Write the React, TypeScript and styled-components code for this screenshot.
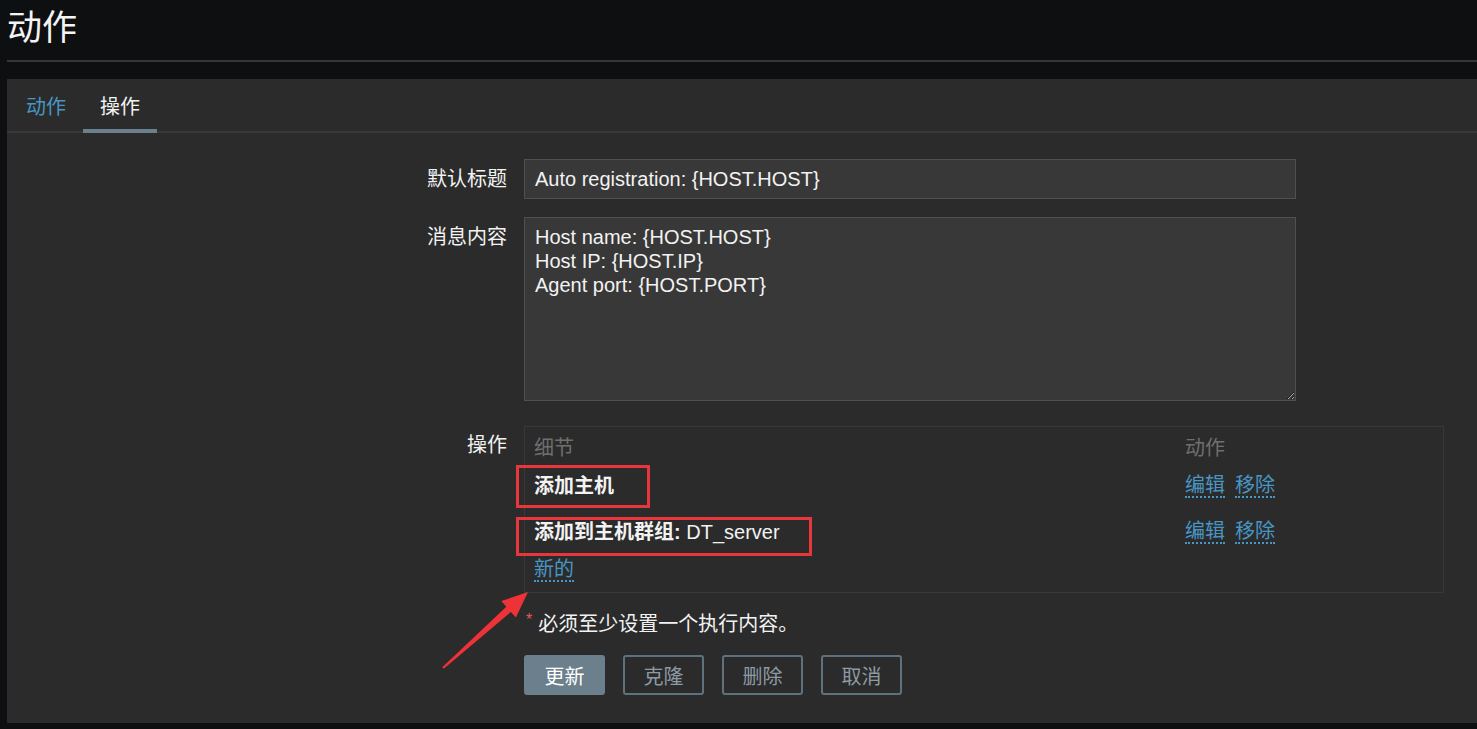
import React from "react";
import styled, { createGlobalStyle } from "styled-components";

const GlobalStyle = createGlobalStyle`
  html, body { margin: 0; padding: 0; background: #0e0f11; }
  body { font-family: "Liberation Sans", "Noto Sans CJK SC", Arial, sans-serif; color: #f2f2f2; }
  * { box-sizing: border-box; }
`;

const Page = styled.div`
  width: 1477px;
  height: 729px;
  padding-left: 7px;
  overflow: hidden;
  display: flex;
  flex-direction: column;
`;

const Header = styled.header`
  height: 62px;
  border-bottom: 2px solid #353638;
  display: flex;
  align-items: flex-start;
`;

const Title = styled.h1`
  margin: 6px 0 0 0;
  font-size: 35px;
  font-weight: 400;
  line-height: 44px;
  color: #f4f4f4;
`;

const Panel = styled.section`
  margin-top: 17px;
  height: 644px;
  background: #2b2b2b;
  display: flex;
  flex-direction: column;
`;

const TabBar = styled.nav`
  height: 54px;
  border-bottom: 2px solid #383838;
  display: flex;
  align-items: stretch;
  padding-left: 2px;
`;

const Tab = styled.div<{ $active?: boolean }>`
  padding: 0 17px;
  display: flex;
  align-items: center;
  padding-top: 2px;
  font-size: 20px;
  color: ${(p) => (p.$active ? "#f2f2f2" : "#4796c4")};
  border-bottom: 4px solid ${(p) => (p.$active ? "#6b7f8c" : "transparent")};
  margin-bottom: -2px;
`;

const Form = styled.div`
  display: grid;
  grid-template-columns: 500px 920px;
  column-gap: 17px;
  row-gap: 18px;
  padding-top: 26px;
  align-items: start;
`;

const Label = styled.div<{ $top?: number }>`
  text-align: right;
  font-size: 20px;
  line-height: 24px;
  padding-top: ${(p) => p.$top ?? 8}px;
  color: #f2f2f2;
`;

const TextInput = styled.div`
  width: 772px;
  height: 40px;
  background: #383838;
  border: 1px solid #4f4f4f;
  font-size: 20px;
  line-height: 38px;
  padding: 0 10px;
  color: #f2f2f2;
`;

const TextArea = styled.textarea`
  width: 772px;
  height: 184px;
  background: #383838;
  border: 1px solid #4f4f4f;
  font-family: "Liberation Sans", "Noto Sans CJK SC", Arial, sans-serif;
  font-size: 20px;
  line-height: 24px;
  padding: 7px 10px;
  color: #f2f2f2;
  resize: both;
  outline: none;
  color-scheme: dark;
  display: block;
`;

const OpsWrap = styled.div`
  position: relative;
  margin-top: 7px;
`;

const OpsBox = styled.div`
  width: 920px;
  height: 167px;
  border: 1px solid #383838;
  padding: 9px 0 0 9px;
  display: grid;
  grid-template-columns: 651px 1fr;
  grid-template-rows: 24px 52px 40px 36px;
  align-items: center;
  font-size: 20px;
`;

const HeadCell = styled.div`
  color: #6f6f6f;
  line-height: 24px;
`;

const Cell = styled.div`
  line-height: 24px;
  color: #f2f2f2;
  white-space: nowrap;
`;

const Strong = styled.b`
  font-weight: 700;
`;

const Links = styled.div`
  display: flex;
  gap: 10px;
  line-height: 24px;
`;

const Link = styled.span`
  color: #4796c4;
  border-bottom: 2px dotted #4796c4;
  line-height: 22px;
`;

const Highlight = styled.div<{ $left: number; $top: number; $w: number; $h: number }>`
  position: absolute;
  left: ${(p) => p.$left}px;
  top: ${(p) => p.$top}px;
  width: ${(p) => p.$w}px;
  height: ${(p) => p.$h}px;
  border: 3px solid #e8373c;
  pointer-events: none;
`;

const Arrow = styled.svg`
  position: absolute;
  left: -90px;
  top: 155px;
  overflow: visible;
`;

const Required = styled.div`
  margin-top: 19px;
  font-size: 20px;
  line-height: 24px;
  color: #f2f2f2;
  display: flex;
  align-items: flex-start;
`;

const Star = styled.span`
  color: #e45959;
  font-size: 16px;
  line-height: 16px;
  margin: 0 6px 0 2px;
`;

const Buttons = styled.div`
  margin-top: 19px;
  display: flex;
  gap: 18px;
`;

const Button = styled.div<{ $primary?: boolean }>`
  width: 81px;
  height: 40px;
  border-radius: 3px;
  display: flex;
  align-items: center;
  justify-content: center;
  font-size: 20px;
  background: ${(p) => (p.$primary ? "#6b7f8c" : "transparent")};
  border: 2px solid ${(p) => (p.$primary ? "#6b7f8c" : "#5f717c")};
  color: ${(p) => (p.$primary ? "#ffffff" : "#8d9aa3")};
`;

const Cols = styled.div``;

export default function App() {
  return (
    <>
      <GlobalStyle />
      <Page>
        <Header>
          <Title>动作</Title>
        </Header>
        <Panel>
          <TabBar>
            <Tab>动作</Tab>
            <Tab $active>操作</Tab>
          </TabBar>
          <Form>
            <Label>默认标题</Label>
            <TextInput>Auto registration: {"{HOST.HOST}"}</TextInput>

            <Label>消息内容</Label>
            <TextArea
              readOnly
              defaultValue={"Host name: {HOST.HOST}\nHost IP: {HOST.IP}\nAgent port: {HOST.PORT}"}
            />

            <Label $top={14}>操作</Label>
            <Cols>
              <OpsWrap>
                <OpsBox>
                  <HeadCell>细节</HeadCell>
                  <HeadCell>动作</HeadCell>
                  <Cell>
                    <Strong>添加主机</Strong>
                  </Cell>
                  <Links>
                    <Link>编辑</Link>
                    <Link>移除</Link>
                  </Links>
                  <Cell>
                    <Strong>添加到主机群组:</Strong> DT_server
                  </Cell>
                  <Links>
                    <Link>编辑</Link>
                    <Link>移除</Link>
                  </Links>
                  <Links>
                    <Link>新的</Link>
                  </Links>
                  <div />
                </OpsBox>
                <Highlight $left={-8} $top={39} $w={134} $h={43} />
                <Highlight $left={-8} $top={91} $w={296} $h={39} />
                <Arrow width="100" height="100" viewBox="0 0 100 100">
                  <polygon
                    points="8.3,86.3 72.3,25.7 67.3,20.1 94,11 81.9,36.5 76.9,30.9 9.7,87.7"
                    fill="#ee3338"
                  />
                </Arrow>
              </OpsWrap>
              <Required>
                <Star>*</Star>
                必须至少设置一个执行内容。
              </Required>
              <Buttons>
                <Button $primary>更新</Button>
                <Button>克隆</Button>
                <Button>删除</Button>
                <Button>取消</Button>
              </Buttons>
            </Cols>
          </Form>
        </Panel>
      </Page>
    </>
  );
}
